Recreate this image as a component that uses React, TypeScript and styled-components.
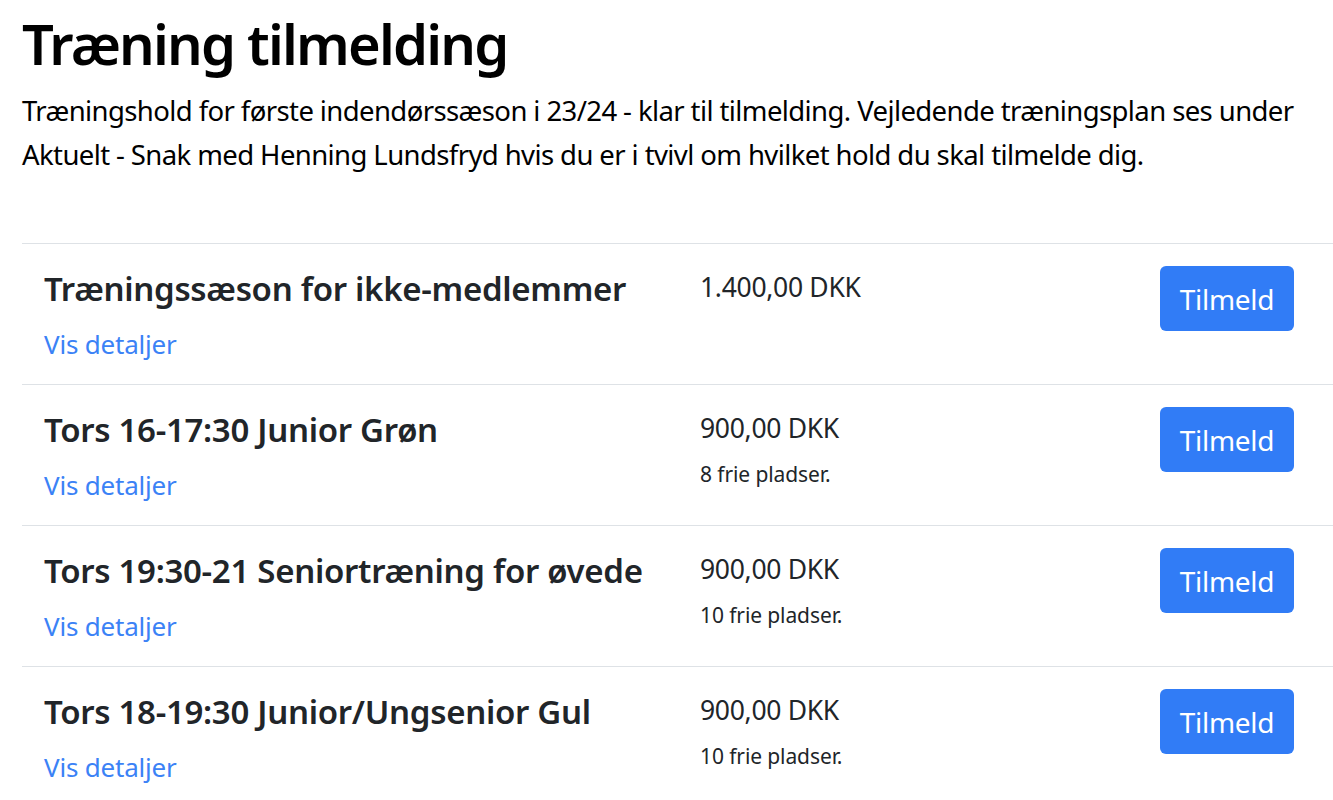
import React from 'react'
import styled, { createGlobalStyle } from 'styled-components'

const GlobalStyle = createGlobalStyle`
  html, body {
    margin: 0;
    padding: 0;
    background: #fff;
  }
  body {
    font-family: 'Noto Sans', 'Open Sans', sans-serif;
    color: #212529;
  }
`

const Page = styled.main`
  padding: 10px 0 0 22px;
`

const Title = styled.h1`
  font-size: 56px;
  font-weight: 600;
  line-height: 1.2;
  color: #000;
  margin: 0 0 12px;
  letter-spacing: -1.8px;
`

const Intro = styled.p`
  font-size: 27.5px;
  line-height: 44px;
  color: #000;
  margin: 0 0 66px;
  letter-spacing: -0.6px;
`

const List = styled.section`
  display: flex;
  flex-direction: column;
`

const Row = styled.div`
  display: flex;
  align-items: flex-start;
  padding: 21px 39px 21px 22px;
  border-top: 1px solid #dee2e6;
`

const Info = styled.div`
  width: 656px;
  flex-shrink: 0;
`

const EventName = styled.h5`
  font-size: 33px;
  font-weight: 600;
  line-height: 41px;
  margin: 0 0 16px;
  padding-top: 3px;
  white-space: nowrap;
  letter-spacing: -0.3px;
`

const DetailsLink = styled.a`
  display: block;
  font-size: 26px;
  line-height: 38px;
  color: #3b82f6;
  text-decoration: none;
  letter-spacing: -0.2px;
`

const PriceCol = styled.div`
  flex: 1;
  padding-top: 2px;
`

const Price = styled.div`
  font-size: 26.5px;
  line-height: 40px;
  letter-spacing: -0.3px;
`

const Seats = styled.div`
  font-size: 21px;
  line-height: 30px;
  margin-top: 11px;
  letter-spacing: -0.1px;
`

const SignUp = styled.button`
  width: 134px;
  height: 65px;
  margin-top: 1px;
  border: none;
  border-radius: 6px;
  background: #317cf6;
  color: #fff;
  font-family: inherit;
  font-size: 28px;
  letter-spacing: -0.3px;
  cursor: pointer;
`

type Event = { name: string; price: string; seats?: number }

const events: Event[] = [
  { name: 'Træningssæson for ikke-medlemmer', price: '1.400,00 DKK' },
  { name: 'Tors 16-17:30 Junior Grøn', price: '900,00 DKK', seats: 8 },
  { name: 'Tors 19:30-21 Seniortræning for øvede', price: '900,00 DKK', seats: 10 },
  { name: 'Tors 18-19:30 Junior/Ungsenior Gul', price: '900,00 DKK', seats: 10 },
]

export default function App() {
  return (
    <>
      <GlobalStyle />
      <Page>
        <Title>Træning tilmelding</Title>
        <Intro>
          Træningshold for første indendørssæson i 23/24 - klar til tilmelding. Vejledende træningsplan ses under
          Aktuelt - Snak med Henning Lundsfryd hvis du er i tvivl om hvilket hold du skal tilmelde dig.
        </Intro>
        <List>
          {events.map((ev) => (
            <Row key={ev.name}>
              <Info>
                <EventName>{ev.name}</EventName>
                <DetailsLink href="#">Vis detaljer</DetailsLink>
              </Info>
              <PriceCol>
                <Price>{ev.price}</Price>
                {ev.seats !== undefined && <Seats>{ev.seats} frie pladser.</Seats>}
              </PriceCol>
              <SignUp>Tilmeld</SignUp>
            </Row>
          ))}
        </List>
      </Page>
    </>
  )
}
